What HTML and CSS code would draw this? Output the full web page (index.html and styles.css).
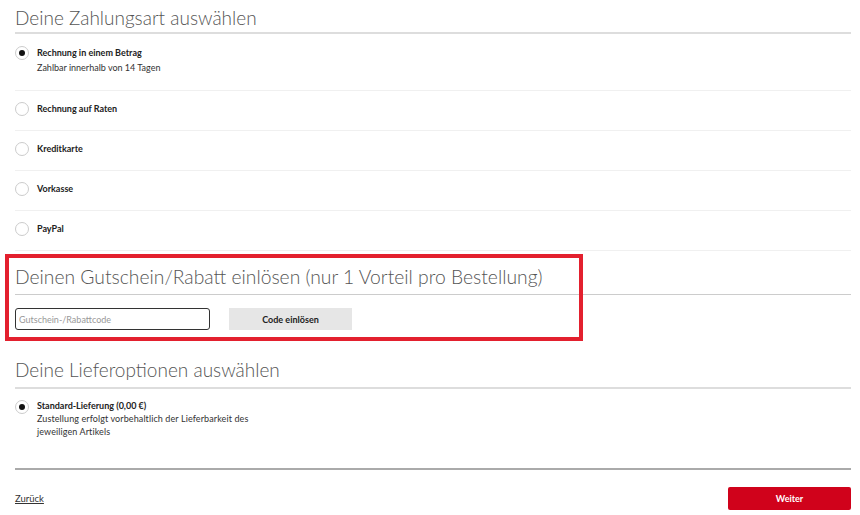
FILE: index.html
```html
<!DOCTYPE html>
<html lang="de">
  <head>
    <meta charset="utf-8" />
    <meta name="viewport" content="width=device-width, initial-scale=1" />
    <title>Zahlungsart auswählen</title>
    <link rel="stylesheet" href="styles.css">
  </head>
  <body>
    <div class="checkout">
      <h2 class="section-title">Deine Zahlungsart auswählen</h2>

      <!-- payment options -->
      <ul class="options">
        <li class="option first">
          <span class="radio checked"></span>
          <div>
            <div class="opt-label">Rechnung in einem Betrag</div>
            <div class="opt-note">Zahlbar innerhalb von 14 Tagen</div>
          </div>
        </li>
        <li class="option">
          <span class="radio"></span>
          <div class="opt-label">Rechnung auf Raten</div>
        </li>
        <li class="option">
          <span class="radio"></span>
          <div class="opt-label">Kreditkarte</div>
        </li>
        <li class="option">
          <span class="radio"></span>
          <div class="opt-label">Vorkasse</div>
        </li>
        <li class="option">
          <span class="radio"></span>
          <div class="opt-label">PayPal</div>
        </li>
      </ul>

      <!-- voucher block, marked with a red frame -->
      <section class="coupon">
        <div class="highlight"></div>
        <h2 class="coupon-title">Deinen Gutschein/Rabatt einlösen (nur 1 Vorteil pro Bestellung)</h2>
        <form class="coupon-form">
          <input type="text" class="coupon-input" placeholder="Gutschein-/Rabattcode" />
          <button type="button" class="coupon-btn">Code einlösen</button>
        </form>
      </section>

      <h2 class="section-title delivery-title">Deine Lieferoptionen auswählen</h2>
      <ul class="options">
        <li class="option delivery">
          <span class="radio checked"></span>
          <div>
            <div class="opt-label">Standard-Lieferung (0,00 €)</div>
            <div class="opt-note">Zustellung erfolgt vorbehaltlich der Lieferbarkeit des<br />jeweiligen Artikels</div>
          </div>
        </li>
      </ul>

      <div class="footer">
        <a href="#" class="back">Zurück</a>
        <button type="button" class="next">Weiter</button>
      </div>
    </div>
  </body>
</html>
```

FILE: styles.css
```css
body {
  margin: 0;
  background: #fff;
  font-family: Lato, "Open Sans", sans-serif;
  color: #222;
}

.checkout {
  width: 836px;
  margin-left: 15px;
}

.section-title {
  margin: 0;
  padding: 5px 0 1px;
  line-height: 26px;
  font-size: 19px;
  font-weight: 300;
  color: #555;
  border-bottom: 2px solid #ddd;
}

.options {
  list-style: none;
  margin: 0;
  padding: 0;
}

.option {
  display: flex;
  align-items: flex-start;
  gap: 8px;
  padding: 11px 0 14px;
  border-bottom: 1px solid #f0f0f0;
}

.option.first {
  padding: 12px 0 16px;
}

.radio {
  flex: none;
  width: 14px;
  height: 14px;
  box-sizing: border-box;
  border: 1px solid #ccc;
  border-radius: 50%;
  display: flex;
  align-items: center;
  justify-content: center;
}

.radio.checked::after {
  content: "";
  width: 6px;
  height: 6px;
  border-radius: 50%;
  background: #111;
}

.opt-label {
  font-size: 9px;
  font-weight: 700;
  line-height: 14px;
  color: #222;
}

.opt-note {
  font-size: 9px;
  line-height: 13px;
  color: #333;
  padding-top: 1px;
}

.coupon {
  position: relative;
  padding-top: 15px;
}

.highlight {
  position: absolute;
  left: -10px;
  top: 3px;
  width: 578px;
  height: 87px;
  box-sizing: border-box;
  border: 4px solid #e3202e;
}

.coupon-title {
  margin: 0;
  padding-bottom: 6px;
  line-height: 22px;
  font-size: 19.3px;
  font-weight: 300;
  color: #555;
  border-bottom: 1px solid #ccc;
}

.coupon-form {
  display: flex;
  gap: 19px;
  margin-top: 13px;
}

.coupon-input {
  width: 195px;
  height: 22px;
  box-sizing: border-box;
  border: 1px solid #333;
  border-radius: 3px;
  padding: 0 3px;
  font-family: Lato, sans-serif;
  font-size: 9px;
}

.coupon-input::placeholder {
  color: #999;
}

.coupon-btn {
  width: 123px;
  height: 22px;
  border: none;
  background: #e6e6e6;
  font-family: Lato, sans-serif;
  font-size: 9px;
  font-weight: 700;
  color: #222;
}

.delivery-title {
  margin-top: 22px;
  padding-bottom: 4px;
}

.option.delivery {
  border-bottom: none;
  padding-bottom: 0;
}

.delivery .opt-label {
  line-height: 12px;
}

.delivery .opt-note {
  padding-top: 0;
  letter-spacing: 0.1px;
}

.footer {
  margin-top: 30px;
  border-top: 2px solid #aaa;
  display: flex;
  justify-content: space-between;
  align-items: center;
  padding-top: 17px;
}

.back {
  font-size: 9.5px;
  color: #333;
  text-decoration: underline;
}

.next {
  width: 123px;
  height: 23px;
  border: none;
  border-radius: 2px;
  background: #d0021b;
  color: #fff;
  font-family: Lato, sans-serif;
  font-size: 9px;
  font-weight: 700;
}
```
